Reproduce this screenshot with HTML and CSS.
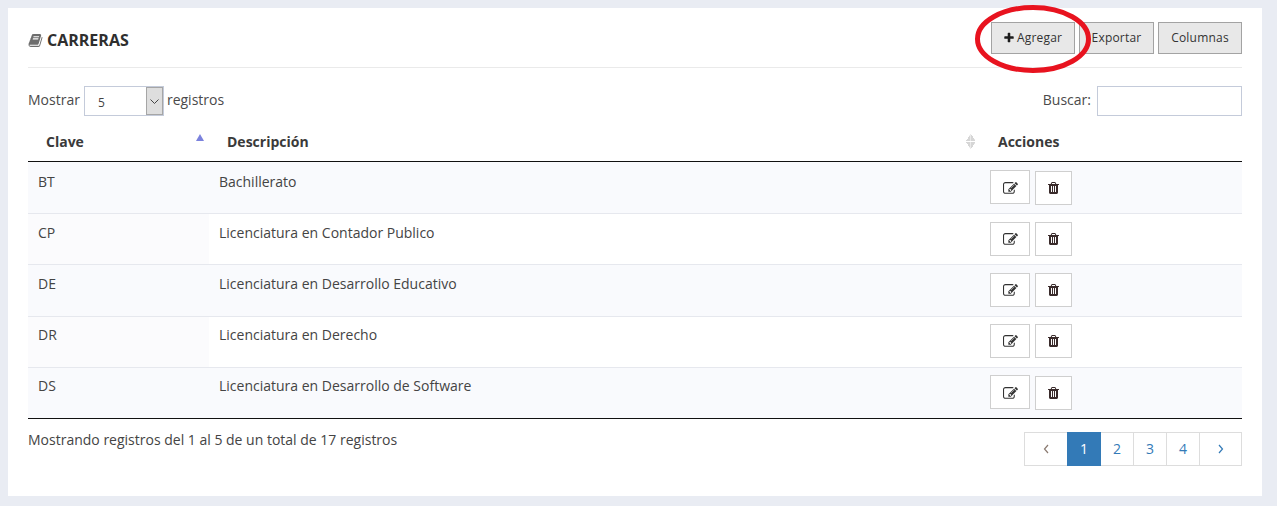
FILE: index.html
```html
<!DOCTYPE html>
<html lang="es">
<head>
<meta charset="utf-8">
<title>Carreras</title>
<link rel="stylesheet" href="styles.css">
</head>
<body>
<svg class="defs" width="0" height="0" aria-hidden="true">
  <symbol id="i-book" viewBox="0 0 1664 1792"><path d="M1639 478q40 57 18 129l-275 906q-19 64-76.5 107.5t-122.5 43.5h-923q-77 0-148.5-53.5t-99.5-131.5q-24-67-2-127 0-4 3-27t4-37q1-8-3-21.5t-3-19.5q2-11 8-21t16.5-23.5 16.5-23.5q23-38 45-91.5t30-91.5q3-10 .5-30t-.5-28q3-11 17-28t17-23q21-36 42-92t25-90q1-9-2.5-32t.5-28q4-13 22-30.5t22-22.5q19-26 42.5-84.5t27.5-96.5q1-8-3-25.5t-2-26.5q2-8 9-18t18-23 17-21q8-12 16.5-30.5t15-35 16-36 19.5-32 26.5-23.5 36-11.5 47.5 5.5l-1 3q38-9 51-9h761q74 0 114 56t18 130l-274 906q-36 119-71.5 153.5t-128.5 34.5h-869q-27 0-38 15-11 16-1 43 24 70 144 70h923q29 0 56-15.5t35-41.5l300-987q7-22 5-57 38 15 59 43zm-1064 2q-4 13 2 22.5t20 9.5h608q13 0 25.5-9.5t16.5-22.5l21-64q4-13-2-22.5t-20-9.5h-608q-13 0-25.5 9.5t-16.5 22.5zm-83 256q-4 13 2 22.5t20 9.5h608q13 0 25.5-9.5t16.5-22.5l21-64q4-13-2-22.5t-20-9.5h-608q-13 0-25.5 9.5t-16.5 22.5z"/></symbol>
  <symbol id="i-plus" viewBox="0 0 1408 1792"><path d="M1408 736v192q0 40-28 68t-68 28h-416v416q0 40-28 68t-68 28h-192q-40 0-68-28t-28-68v-416h-416q-40 0-68-28t-28-68v-192q0-40 28-68t68-28h416v-416q0-40 28-68t68-28h192q40 0 68 28t28 68v416h416q40 0 68 28t28 68z"/></symbol>
  <symbol id="i-edit" viewBox="0 0 1792 1792"><path d="M888 1184l116-116-152-152-116 116v56h96v96h56zm440-720q-16-16-33 1l-350 350q-17 17-1 33t33-1l350-350q17-17 1-33zm80 594v190q0 119-84.5 203.5t-203.5 84.5h-832q-119 0-203.5-84.5t-84.5-203.5v-832q0-119 84.5-203.5t203.5-84.5h832q63 0 117 25 15 7 18 23 3 17-9 29l-49 49q-14 14-32 8-23-6-45-6h-832q-66 0-113 47t-47 113v832q0 66 47 113t113 47h832q66 0 113-47t47-113v-126q0-13 9-22l64-64q15-15 35-7t20 29zm-96-738l288 288-672 672h-288v-288zm444 132l-92 92-288-288 92-92q28-28 68-28t68 28l152 152q28 28 28 68t-28 68z"/></symbol>
  <symbol id="i-trash" viewBox="0 0 1408 1792"><path d="M512 1248v-704q0-14-9-23t-23-9h-64q-14 0-23 9t-9 23v704q0 14 9 23t23 9h64q14 0 23-9t9-23zm256 0v-704q0-14-9-23t-23-9h-64q-14 0-23 9t-9 23v704q0 14 9 23t23 9h64q14 0 23-9t9-23zm256 0v-704q0-14-9-23t-23-9h-64q-14 0-23 9t-9 23v704q0 14 9 23t23 9h64q14 0 23-9t9-23zm-544-992h448l-48-117q-7-9-17-11h-317q-10 2-17 11zm928 32v64q0 14-9 23t-23 9h-96v948q0 83-47 143.5t-113 60.5h-832q-66 0-113-58.5t-47-141.5v-952h-96q-14 0-23-9t-9-23v-64q0-14 9-23t23-9h309l70-167q15-37 54-63t79-26h320q40 0 79 26t54 63l70 167h309q14 0 23 9t9 23z"/></symbol>
</svg>
<main class="card">
  <header class="head">
    <h2 class="title"><svg class="ico-book"><use href="#i-book"/></svg>CARRERAS</h2>
    <div class="tools">
      <button class="tool tool-add"><svg class="ico-plus"><use href="#i-plus"/></svg>Agregar</button>
      <button class="tool tool-exp">Exportar</button>
      <button class="tool tool-col">Columnas</button>
    </div>
  </header>
  <div class="controls">
    <label class="length">Mostrar
      <span class="select"><span class="select-val">5</span><span class="select-arrow"><svg width="9" height="5" viewBox="0 0 9 5"><path d="M.5 .5l4 4 4-4" fill="none" stroke="#444" stroke-width="1"/></svg></span></span>
      registros</label>
    <label class="search">Buscar:<input class="search-input" type="text"></label>
  </div>
  <table class="grid">
    <thead>
      <tr>
        <th class="c1">Clave<span class="sort sort-asc"></span></th>
        <th class="c2">Descripción<span class="sort sort-both"></span></th>
        <th class="c3">Acciones</th>
      </tr>
    </thead>
    <tbody>
      <tr class="odd"><td>BT</td><td>Bachillerato</td><td class="acts"><a class="act"><svg class="ico-edit"><use href="#i-edit"/></svg></a><a class="act act-del"><svg class="ico-trash"><use href="#i-trash"/></svg></a></td></tr>
      <tr class="even"><td>CP</td><td>Licenciatura en Contador Publico</td><td class="acts"><a class="act"><svg class="ico-edit"><use href="#i-edit"/></svg></a><a class="act act-del"><svg class="ico-trash"><use href="#i-trash"/></svg></a></td></tr>
      <tr class="odd"><td>DE</td><td>Licenciatura en Desarrollo Educativo</td><td class="acts"><a class="act"><svg class="ico-edit"><use href="#i-edit"/></svg></a><a class="act act-del"><svg class="ico-trash"><use href="#i-trash"/></svg></a></td></tr>
      <tr class="even"><td>DR</td><td>Licenciatura en Derecho</td><td class="acts"><a class="act"><svg class="ico-edit"><use href="#i-edit"/></svg></a><a class="act act-del"><svg class="ico-trash"><use href="#i-trash"/></svg></a></td></tr>
      <tr class="odd"><td>DS</td><td>Licenciatura en Desarrollo de Software</td><td class="acts"><a class="act"><svg class="ico-edit"><use href="#i-edit"/></svg></a><a class="act act-del"><svg class="ico-trash"><use href="#i-trash"/></svg></a></td></tr>
    </tbody>
  </table>
  <footer class="foot">
    <div class="info">Mostrando registros del 1 al 5 de un total de 17 registros</div>
    <nav class="pager">
      <a class="pg pg-prev"><svg class="chev" viewBox="0 0 7 10"><path d="M5 1L1.500 5 5 9"/></svg></a><a class="pg pg-on">1</a><a class="pg">2</a><a class="pg">3</a><a class="pg">4</a><a class="pg pg-next"><svg class="chev" viewBox="0 0 7 10"><path d="M2 1l3.500 4L2 9"/></svg></a>
    </nav>
  </footer>
</main>
<svg class="mark" width="130" height="76" viewBox="0 0 130 76" aria-hidden="true">
  <ellipse cx="66" cy="38" rx="55.500" ry="31.500" fill="none" stroke="#e8131f" stroke-width="5"/>
</svg>
</body>
</html>
```
FILE: styles.css
```css
* { box-sizing: border-box; }
html, body { height: 100%; }
body {
  margin: 0;
  padding: 8px 15px 10px 8px;
  background: #e9ecf3;
  font-family: "Open Sans", "Liberation Sans", sans-serif;
  font-size: 14px;
  color: #3d3d3d;
  position: relative;
  overflow: hidden;
}
.defs { position: absolute; }
.card {
  background: #fff;
  height: 488px;
  padding: 14px 20px 0;
}
.head {
  display: flex;
  justify-content: space-between;
  align-items: flex-start;
  height: 46px;
  border-bottom: 1px solid #eaeaea;
}
.title {
  margin: 8px 0 0;
  display: flex;
  align-items: center;
  font-size: 16px;
  line-height: 20px;
  font-weight: 700;
  color: #2f2f2f;
}
.ico-book { width: 15px; height: 15px; margin-right: 4px; fill: #6d6d6d; }
.tools { display: flex; gap: 4px; }
.tool {
  height: 32px;
  width: 84px;
  padding: 0 0 2px;
  background: #e8e8e8;
  border: 1px solid #a3a3a3;
  border-radius: 0;
  font-family: inherit;
  font-size: 12px;
  letter-spacing: .2px;
  color: #333;
  display: flex;
  align-items: center;
  justify-content: center;
}
.tool-exp { width: 75px; }
.ico-plus { width: 10px; height: 12px; margin: 2px 3px 0 0; fill: #1c1c1c; }
.controls {
  display: flex;
  justify-content: space-between;
  align-items: flex-start;
  margin-top: 18px;
  height: 30px;
  color: #4a4a4a;
  line-height: 28px;
}
.length { display: flex; align-items: flex-start; gap: 4px; }
.select {
  display: flex;
  width: 80px;
  height: 30px;
  margin-right: -1px;
  border: 1px solid #c4cbda;
  background: #fff;
}
.select-val { flex: 1; padding: 3px 0 0 13px; font-size: 12px; line-height: 26px; color: #444; }
.select-arrow {
  width: 17px;
  background: #dedede;
  border: 1px solid #a6a6a6;
  display: flex;
  align-items: center;
  justify-content: center;
}
.search { display: flex; align-items: flex-start; gap: 6px; }
.search-input {
  width: 145px;
  height: 30px;
  border: 1px solid #c4cbda;
  background: #fff;
  outline: none;
  padding: 0 8px;
}
.grid {
  width: 100%;
  margin-top: 4px;
  border-collapse: separate;
  border-spacing: 0;
  table-layout: fixed;
  border-bottom: 1px solid #111;
}
.grid th {
  height: 42px;
  padding: 2px 18px 0;
  text-align: left;
  font-weight: 700;
  color: #3a3a3a;
  border-bottom: 1px solid #111;
  position: relative;
}
.c1 { width: 181px; }
.c3 { width: 252px; }
.grid th.c3 { padding-left: 8px; }
.sort { position: absolute; width: 0; height: 0; }
.sort-asc {
  top: 14px;
  right: 5px;
  border-left: 4.500px solid transparent;
  border-right: 4.500px solid transparent;
  border-bottom: 7px solid #7b82dd;
}
.sort-both { top: 14px; right: 15px; width: 9px; height: 15px;
  background:
    linear-gradient(to bottom right, transparent 49%, #d6d6d6 51%) left top / 4.500px 7px no-repeat,
    linear-gradient(to bottom left, transparent 49%, #d6d6d6 51%) right top / 4.500px 7px no-repeat,
    linear-gradient(to top right, transparent 49%, #d6d6d6 51%) left bottom / 4.500px 7px no-repeat,
    linear-gradient(to top left, transparent 49%, #d6d6d6 51%) right bottom / 4.500px 7px no-repeat;
}
.grid td {
  height: 51.200px;
  padding: 0 10px 13px;
  border-top: 1px solid #e6e8ee;
  vertical-align: middle;
  color: #444;
  line-height: 20px;
}
.grid tbody tr:first-child td { border-top-color: transparent; }
.odd td { background: #f9fafd; }
.even td:first-child { background: #fbfbfd; }
.grid td.acts { padding: 0; font-size: 0; white-space: nowrap; }
.act {
  display: inline-flex;
  align-items: center;
  justify-content: center;
  width: 40px;
  height: 34px;
  background: #fff;
  border: 1px solid #cfcfcf;
}
.act-del { width: 37px; margin-left: 5px; }
.ico-edit { width: 15px; height: 15px; margin-top: 2px; fill: #333; }
.ico-trash { width: 11px; height: 14px; margin-top: 2px; fill: #3a2b2b; }
.foot {
  display: flex;
  justify-content: space-between;
  align-items: flex-start;
  margin-top: 13px;
}
.info { line-height: 16px; color: #444; }
.pager { display: flex; }
.pg {
  width: 34px;
  height: 34px;
  margin-left: -1px;
  display: flex;
  align-items: center;
  justify-content: center;
  border: 1px solid #ddd;
  color: #337ab7;
  background: #fff;
}
.pg-prev { width: 44px; margin-left: 0; color: #8a7a70; }
.pg-next { width: 43px; }
.chev { width: 7px; height: 10px; fill: none; stroke: currentColor; stroke-width: 1.200; }
.pg-on { background: #337ab7; border-color: #337ab7; color: #fff; position: relative; }
.mark { position: absolute; left: 967px; top: 1px; pointer-events: none; }
```
